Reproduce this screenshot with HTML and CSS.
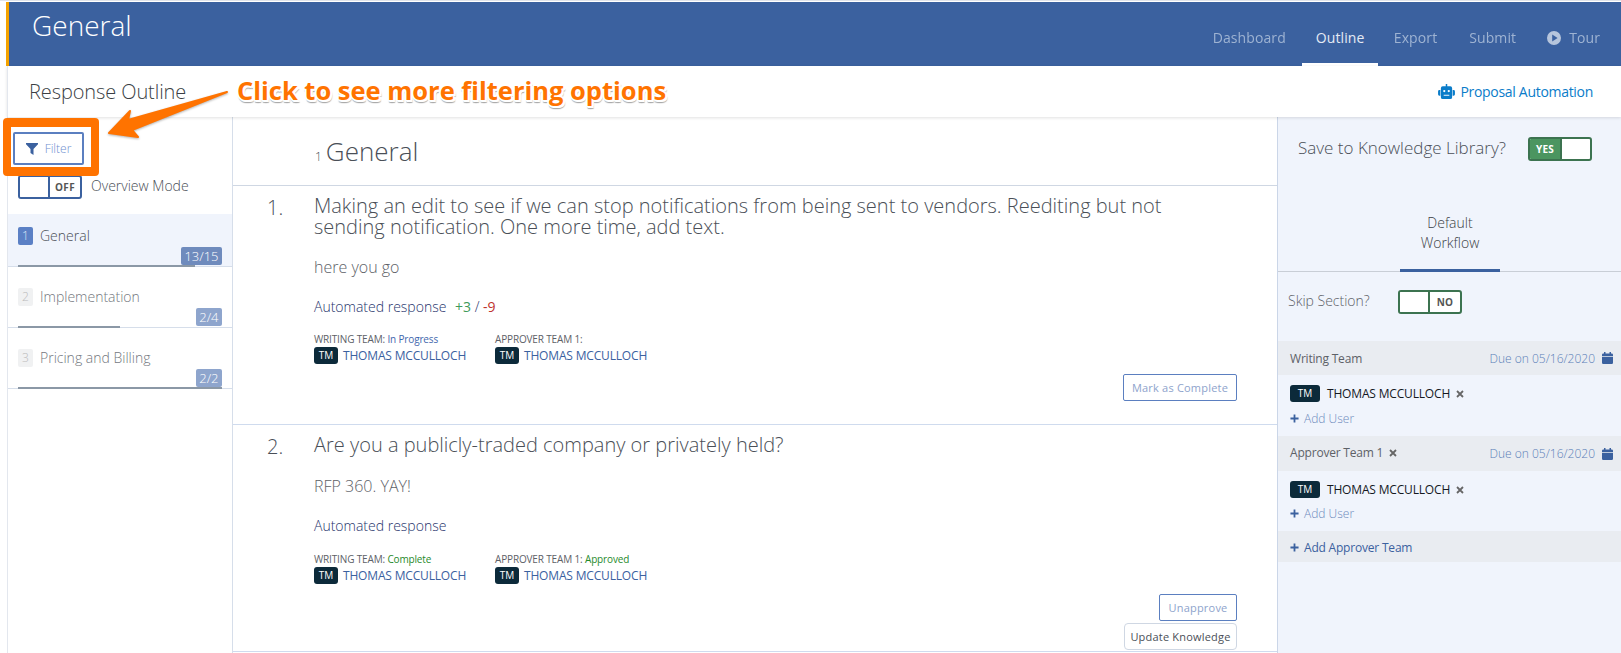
FILE: index.html
```html
<!DOCTYPE html>
<html lang="en">
<head>
<meta charset="utf-8">
<title>General - Response Outline</title>
<link rel="stylesheet" href="styles.css">
</head>
<body>
<div class="app">
  <header class="topbar">
    <h1 class="topbar-title">General</h1>
    <nav class="nav">
      <a class="nav-item">Dashboard</a>
      <a class="nav-item active">Outline</a>
      <a class="nav-item">Export</a>
      <a class="nav-item">Submit</a>
      <a class="nav-item tour"><svg class="play" viewBox="0 0 14 14"><path fill-rule="evenodd" d="M7 0a7 7 0 1 1 0 14A7 7 0 0 1 7 0zM5.2 3.6v6.8L10.6 7z"/></svg>Tour</a>
    </nav>
  </header>
  <div class="subbar">
    <div class="subbar-title">Response Outline</div>
    <a class="automation"><svg class="robot" viewBox="0 0 18 16"><path d="M8.2 0h1.600v2.400H13a2 2 0 0 1 2 2V14a2 2 0 0 1-2 2H5a2 2 0 0 1-2-2V4.400a2 2 0 0 1 2-2h3.200zM1.600 6.500H2.400V12.500H1.600A1.500 1.500 0 0 1 0 11V8A1.500 1.500 0 0 1 1.600 6.500zM15.600 6.500h.8A1.500 1.500 0 0 1 18 8v3a1.500 1.500 0 0 1-1.600 1.500h-.8z"/><circle cx="6.600" cy="7.500" r="1.200" fill="#fff"/><circle cx="11.400" cy="7.500" r="1.200" fill="#fff"/><rect x="6" y="11.500" width="6" height="1" fill="#fff"/></svg>Proposal Automation</a>
  </div>
  <div class="columns">
    <aside class="sidebar">
      <div class="filter-wrap">
        <button class="filter-btn"><svg class="funnel" viewBox="0 0 12 12"><path d="M0 0h12v1.200L7.500 6v6L4.500 10V6L0 1.200z"/></svg>Filter</button>
      </div>
      <div class="overview">
        <span class="toggle toggle-blue"><span class="knob"></span><b class="toggle-label">OFF</b></span>
        <span class="overview-label">Overview Mode</span>
      </div>
      <div class="sec-list">
        <div class="sec current">
          <div class="sec-head"><span class="sec-num">1</span>General</div>
          <span class="sec-count">13/15</span>
          <span class="sec-bar bar-87"></span>
        </div>
        <div class="sec">
          <div class="sec-head"><span class="sec-num">2</span>Implementation</div>
          <span class="sec-count">2/4</span>
          <span class="sec-bar bar-50"></span>
        </div>
        <div class="sec">
          <div class="sec-head"><span class="sec-num">3</span>Pricing and Billing</div>
          <span class="sec-count">2/2</span>
          <span class="sec-bar bar-100"></span>
        </div>
      </div>
    </aside>
    <main class="main">
      <div class="main-title"><small>1</small><span>General</span></div>
      <section class="q q1">
        <div class="q-num">1.</div>
        <div class="q-body">
          <div class="q-text">Making an edit to see if we can stop notifications from being sent to vendors. Reediting but not sending notification. One more time, add text.</div>
          <p class="q-answer">here you go</p>
          <p class="q-auto">Automated response <span class="plus">+3</span> / <span class="minus">-9</span></p>
          <div class="teams">
            <div class="team">
              <div class="team-label">WRITING TEAM: <span class="st-progress">In Progress</span></div>
              <div class="team-user"><span class="tm">TM</span>THOMAS MCCULLOCH</div>
            </div>
            <div class="team">
              <div class="team-label">APPROVER TEAM 1:</div>
              <div class="team-user"><span class="tm">TM</span>THOMAS MCCULLOCH</div>
            </div>
          </div>
          <div class="actions"><button class="btn btn-blue btn-complete">Mark as Complete</button></div>
        </div>
      </section>
      <section class="q q2">
        <div class="q-num">2.</div>
        <div class="q-body">
          <div class="q-text">Are you a publicly-traded company or privately held?</div>
          <p class="q-answer">RFP 360. YAY!</p>
          <p class="q-auto">Automated response</p>
          <div class="teams">
            <div class="team">
              <div class="team-label">WRITING TEAM: <span class="st-done">Complete</span></div>
              <div class="team-user"><span class="tm">TM</span>THOMAS MCCULLOCH</div>
            </div>
            <div class="team">
              <div class="team-label">APPROVER TEAM 1: <span class="st-done">Approved</span></div>
              <div class="team-user"><span class="tm">TM</span>THOMAS MCCULLOCH</div>
            </div>
          </div>
          <div class="actions actions-2">
            <button class="btn btn-blue btn-unapprove">Unapprove</button>
            <button class="btn btn-grey">Update Knowledge</button>
          </div>
        </div>
      </section>
    </main>
    <aside class="panel">
      <div class="save-row">
        <span class="save-label">Save to Knowledge Library?</span>
        <span class="toggle toggle-green on"><b class="toggle-label">YES</b><span class="knob"></span></span>
      </div>
      <div class="tabs"><div class="tab">Default<br>Workflow</div></div>
      <div class="skip-row">
        <span class="skip-label">Skip Section?</span>
        <span class="toggle toggle-green"><span class="knob"></span><b class="toggle-label">NO</b></span>
      </div>
      <div class="team-head">
        <span>Writing Team</span>
        <span class="due">Due on 05/16/2020<svg class="cal" viewBox="0 0 11 12"><path d="M2 0h1.500v1.500h4V0H9v1.500h.7A1.300 1.300 0 0 1 11 2.800V4H0V2.800A1.300 1.300 0 0 1 1.300 1.500H2zM0 4.800h11v6A1.200 1.200 0 0 1 9.800 12H1.200A1.200 1.200 0 0 1 0 10.800z"/></svg></span>
      </div>
      <div class="team-body">
        <div class="member"><span class="tm tm-wide">TM</span>THOMAS MCCULLOCH<svg class="x" viewBox="0 0 8 8"><path d="M1 1l6 6M7 1L1 7"/></svg></div>
        <a class="add-user"><svg class="plus-ic" viewBox="0 0 10 10"><path d="M5 0.500v9M0.500 5h9"/></svg>Add User</a>
      </div>
      <div class="team-head team-head-2">
        <span class="head-name">Approver Team 1<svg class="x x-head" viewBox="0 0 8 8"><path d="M1 1l6 6M7 1L1 7"/></svg></span>
        <span class="due">Due on 05/16/2020<svg class="cal" viewBox="0 0 11 12"><path d="M2 0h1.500v1.500h4V0H9v1.500h.7A1.300 1.300 0 0 1 11 2.800V4H0V2.800A1.300 1.300 0 0 1 1.300 1.500H2zM0 4.800h11v6A1.200 1.200 0 0 1 9.800 12H1.200A1.200 1.200 0 0 1 0 10.800z"/></svg></span>
      </div>
      <div class="team-body team-body-2">
        <div class="member"><span class="tm tm-wide">TM</span>THOMAS MCCULLOCH<svg class="x" viewBox="0 0 8 8"><path d="M1 1l6 6M7 1L1 7"/></svg></div>
        <a class="add-user"><svg class="plus-ic" viewBox="0 0 10 10"><path d="M5 0.500v9M0.500 5h9"/></svg>Add User</a>
      </div>
      <div class="add-approver"><svg class="plus-ic" viewBox="0 0 10 10"><path d="M5 0.500v9M0.500 5h9"/></svg>Add Approver Team</div>
    </aside>
  </div>
</div>
<div class="callout-box"></div>
<svg class="callout-arrow" viewBox="0 0 240 70"><path d="M227 3 L128 31 L130 22 L109 44 L138 48 L132 41 Z"/></svg>
<div class="callout-text">Click to see more filtering options</div>
</body>
</html>
```

FILE: styles.css
```css
* { box-sizing: border-box; }
html, body { margin: 0; height: 653px; overflow: hidden; background: #fff; }
body { font-family: "Open Sans", "Liberation Sans", sans-serif; font-weight: 300; color: #4a4f57; position: relative; }
button { font-family: inherit; cursor: pointer; }
p { margin: 0; }

.app { padding-top: 2px; border-top: 1px solid #dfe3ea; height: 653px; }
.topbar { height: 64px; margin-top: -1px; margin-left: 6px; background: #3b619f; border-left: 3px solid #f5a300; display: flex; justify-content: space-between; padding-left: 23px; }
.topbar-title { margin: 5px 0 0; font-size: 28px; line-height: 36px; font-weight: 300; color: #fff; }
.nav { display: flex; padding-right: 21px; }
.nav-item { height: 64px; padding: 0 16px; line-height: 72px; font-size: 14px; color: #a9bcd8; letter-spacing: .1px; font-weight: 400; opacity: .9; white-space: nowrap; }
.nav-item.active { color: #e4eaf4; border-bottom: 3px solid #fff; opacity: 1; padding: 0 14px; width: 76px; }
.nav-item.tour { display: flex; align-items: center; padding-top: 8px; line-height: 1; padding-right: 0; padding-left: 15px; }
.play { width: 14px; height: 14px; fill: #c4d0e3; margin-right: 8px; }

.subbar { height: 51px; margin-left: 7px; display: flex; justify-content: space-between; align-items: center; padding: 0 28px 0 21px; border-left: 1px solid #e3e7ee; box-shadow: 0 1px 3px rgba(0,0,0,.12); position: relative; z-index: 1; background: #fff; }
.subbar-title { font-size: 20px; color: #3b3f45; letter-spacing: -.1px; }
.automation { display: flex; align-items: center; color: #0a7cc9; font-size: 14px; font-weight: 400; letter-spacing: -.3px; }
.robot { width: 17px; height: 15px; fill: #0a7cc9; margin-right: 5px; }

.columns { display: flex; height: 536px; margin-left: 7px; }
.sidebar { width: 226px; border-left: 1px solid #e3e7ee; border-right: 1px solid #d6deea; flex: none; }
.filter-wrap { padding: 15px 0 0 5px; }
.filter-btn { width: 71px; height: 33px; background: #fff; border: 2px solid #5b7fc0; border-radius: 2px; color: #6f8fcf; font-size: 12px; font-weight: 300; display: flex; align-items: center; justify-content: center; padding: 0; }
.funnel { width: 12px; height: 12px; fill: #3b619f; margin-right: 7px; }
.overview { display: flex; align-items: center; padding: 10px 0 0 10px; height: 34px; }
.overview-label { font-size: 14px; margin: -4px 0 0 9px; color: #4a4f57; font-weight: 300; }

.toggle { display: inline-flex; width: 64px; height: 24px; border: 2px solid #3b619f; border-radius: 3px; overflow: hidden; background: #fff; flex: none; }
.toggle-green { border-color: #3c7350; }
.knob { flex: 1; background: #fff; }
.toggle-label { width: 32px; font-size: 10px; font-weight: 700; line-height: 20px; text-align: center; color: #555; border-left: 2px solid #3b619f; letter-spacing: .3px; }
.toggle-green .toggle-label { border-left-color: #3c7350; }
.toggle.on .toggle-label { background: #4b9560; color: #fff; border-left: 0; border-right: 2px solid #3c7350; }
.toggle.on .knob { border-radius: 0 2px 2px 0; }

.sec-list { margin-top: 15px; }
.sec { height: 61px; position: relative; padding: 12px 0 0 10px; border-bottom: 1px solid #d6deea; }
.sec.current { height: 53px; background: #f0f4fc; }
.sec + .sec .sec-head { margin-top: 8px; }
.sec-head { display: flex; align-items: center; font-size: 14px; color: #74787e; }
.sec.current .sec-head { color: #4a4f57; }
.sec-num { width: 15px; height: 18px; border-radius: 2px; background: #f0f1f2; color: #bbb; text-align: center; font-size: 12px; line-height: 18px; margin-right: 7px; }
.current .sec-num { background: #5b80c5; color: #dbe5f6; }
.sec-count { position: absolute; right: 10px; bottom: 1px; height: 18px; padding: 0 3.500px; border-radius: 2px; background: #8ea5cd; color: #fff; font-size: 13px; line-height: 18px; }
.current .sec-count { background: #6f8bbd; }
.sec-bar { position: absolute; left: 10px; bottom: -1px; height: 2px; background: #8b98a6; }
.bar-87 { width: 177px; }
.bar-50 { width: 102px; }
.bar-100 { width: 204px; }

.main { flex: 1; min-width: 0; }
.main-title { display: flex; align-items: baseline; gap: 4px; height: 69px; padding: 16px 0 0 82px; font-size: 26px; line-height: 36px; color: #4a4f57; border-bottom: 1px solid #cfd7e3; }
.main-title small { font-size: 12px; }
.q { display: flex; padding: 0 40px 0 34px; border-bottom: 1px solid #cfdbee; }
.q1 { height: 239px; padding-top: 9px; }
.q2 { height: 227px; padding-top: 9px; }
.q-num { width: 47px; font-size: 20px; line-height: 26px; flex: none; }
.q-text { font-size: 20px; line-height: 21px; max-width: 860px; color: #4a4f57; }
.q-body { flex: 1; min-width: 0; }
.q-answer { margin-top: 21px; font-size: 16px; line-height: 20px; color: #5d6167; }
.q1 .q-answer { margin-top: 20px; }
.q-auto { margin-top: 20px; font-size: 14px; line-height: 20px; color: #26336b; font-weight: 300; }
.plus { color: #3f9a5a; margin-left: 5px; font-weight: 400; }
.minus { color: #c0342d; font-weight: 400; }
.teams { display: flex; margin-top: 15px; }
.q2 .teams { margin-top: 16px; }
.team { width: 181px; }
.team-label { font-size: 10px; line-height: 14px; color: #5d6167; font-weight: 400; letter-spacing: -.15px; }
.st-progress { color: #3f67ad; }
.st-done { color: #1f8a2b; }
.team-user { display: flex; align-items: center; margin-top: 1px; font-size: 12px; font-weight: 400; color: #3b619f; white-space: nowrap; letter-spacing: -.17px; }
.tm { display: inline-block; width: 24px; height: 17px; border-radius: 3px; background: #0c2a3a; color: #fff; font-size: 10px; line-height: 17px; text-align: center; margin-right: 5px; font-weight: 400; letter-spacing: 0; }
.tm-wide { width: 30px; margin-right: 7px; }
.actions { display: flex; flex-direction: column; align-items: flex-end; margin-top: 10px; }
.actions-2 { margin-top: 10px; gap: 2px; }
.btn { height: 27px; border-radius: 2px; background: #fff; font-size: 11px; font-weight: 400; padding: 0; letter-spacing: .2px; }
.btn-blue { border: 1px solid #5b7fc0; color: #8ea3cc; }
.btn-complete { width: 114px; }
.btn-unapprove { width: 78px; }
.btn-grey { width: 113px; border: 1px solid #cfd7e3; color: #4a4f57; border-radius: 4px; }

.panel { width: 344px; flex: none; background: #f0f4fc; border-left: 1px solid #cbd6e8; }
.save-row { display: flex; justify-content: space-between; align-items: center; padding: 20px 29px 0 20px; }
.save-label { font-size: 17px; color: #4a4f57; margin-top: -4px; }
.tabs { border-bottom: 1px solid #c9ced6; display: flex; margin-top: 39px; height: 72px; padding-left: 122px; }
.tab { width: 100px; height: 72px; border-bottom: 3px solid #3b619f; text-align: center; font-size: 14px; line-height: 20px; font-weight: 300; color: #3b3f45; padding-top: 13px; }
.skip-row { display: flex; align-items: center; height: 69px; padding: 0 0 10px 10px; }
.skip-label { font-size: 14px; width: 110px; color: #5d6167; margin-top: -3px; }
.team-head { display: flex; justify-content: space-between; align-items: center; height: 34px; padding: 0 8px 0 12px; background: #e9ecf1; font-size: 12px; font-weight: 400; color: #5d6167; letter-spacing: -.2px; }
.team-head-2 { height: 35px; }
.head-name { margin-top: -2px; }
.due { display: flex; align-items: center; color: #5b7fb8; font-weight: 300; font-size: 12px; letter-spacing: 0; }
.cal { width: 11px; height: 12px; fill: #3b619f; margin-left: 7px; }
.team-body { height: 61px; padding: 10px 0 0 12px; }
.team-body-2 { height: 60px; }
.team-body-2 .add-user { margin-top: 5px; }
.member { display: flex; align-items: center; font-size: 12px; font-weight: 400; color: #15191f; height: 17px; letter-spacing: -.17px; }
.x { width: 8px; height: 8px; stroke: #666; stroke-width: 1.800; margin-left: 6px; }
.x-head { display: inline-block; }
.add-user { display: flex; align-items: center; margin-top: 6px; font-size: 12px; color: #6f8bbd; font-weight: 300; height: 20px; }
.plus-ic { width: 9px; height: 9px; stroke: #3b619f; stroke-width: 2; margin-right: 5px; }
.add-approver { display: flex; align-items: center; height: 31px; padding: 1px 0 0 12px; background: #e9ecf1; font-size: 12px; font-weight: 400; color: #3b619f; letter-spacing: -.2px; }

.callout-box { position: absolute; left: 3px; top: 118px; width: 96px; height: 58px; border: solid #ff7300; border-width: 9px 8px; border-radius: 4px; z-index: 5; }
.callout-arrow { position: absolute; left: 0; top: 89px; width: 240px; height: 70px; fill: #ff7300; stroke: #ff7300; stroke-width: 2; stroke-linejoin: round; filter: drop-shadow(0 1px 1px rgba(0,0,0,.3)); z-index: 5; }
.callout-text { position: absolute; left: 237px; top: 72px; font-family: "Open Sans", sans-serif; font-size: 25.500px; line-height: 36px; font-weight: 700; color: #ff7300; white-space: nowrap; z-index: 6; text-shadow: -1px -1px 0 #fff, 1px -1px 0 #fff, -1px 1px 0 #fff, 1px 1px 0 #fff, 0 -2px 0 #fff, -2px 0 0 #fff, 2px 0 0 #fff, 0 2px 0 #fff, 2px 2px 0 #fff, 0 3px 1px #aaa, 2px 3px 1px #aaa; }
```
